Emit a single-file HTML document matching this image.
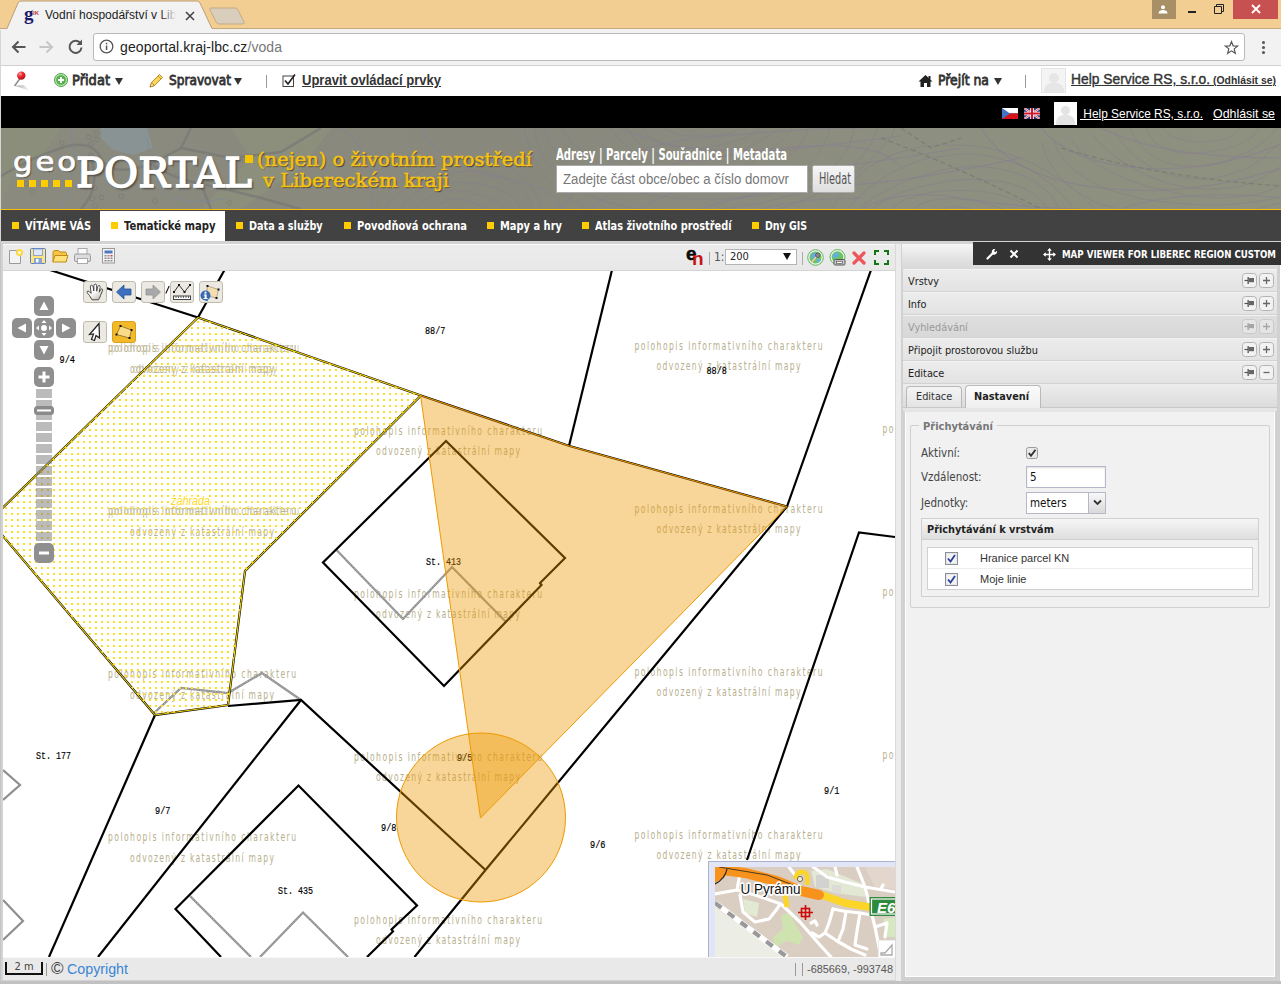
<!DOCTYPE html>
<html lang="cs"><head>
<meta charset="utf-8">
<title>Vodní hospodářství v Libereckém kraji</title>
<style>
*{box-sizing:border-box;margin:0;padding:0}
html,body{width:1281px;height:984px;overflow:hidden;background:#d6d6d6;font-family:"Liberation Sans",sans-serif;}
.abs{position:absolute}
#root{position:relative;width:1281px;height:984px;overflow:hidden}
/* ---------- browser chrome ---------- */
#tabbar{left:0;top:0;width:1281px;height:30px;background:#f2ce93}
#toolbar{left:1px;top:29px;width:1280px;height:37px;background:#f2f2f2;border-bottom:1px solid #d0d0d0}
#urlbox{left:92px;top:4px;width:1152px;height:28px;background:#fff;border:1px solid #b9b9b9;border-radius:3px}
#urltxt{left:26px;top:5px;font-size:14px;color:#222;white-space:nowrap;letter-spacing:0.1px}
#urltxt span{color:#777}
#tabtitle{left:45px;top:8px;font-size:12px;color:#222;white-space:nowrap;width:132px;overflow:hidden}
/* ---------- admin bar ---------- */
#admin{left:1px;top:66px;width:1280px;height:30px;background:#fff}
#admin .t{position:absolute;top:7px;font-weight:bold;font-size:14px;color:#333;white-space:nowrap;font-family:"DejaVu Sans Condensed","DejaVu Sans",sans-serif}
#admin .t.sb{font-family:"DejaVu Sans",sans-serif;font-weight:normal;-webkit-text-stroke:0.800px #333;top:6px}
/* ---------- black bar ---------- */
#black{left:1px;top:96px;width:1280px;height:32px;background:#000}
#black .t{position:absolute;top:10px;font-size:13px;color:#fff;text-decoration:underline;white-space:nowrap}
/* ---------- banner ---------- */
#banner{left:1px;top:128px;width:1280px;height:81px;background:#78786a;overflow:hidden}
#nav{left:1px;top:209px;width:1280px;height:32px;background:#424242;border-top:1px solid #fdbf06}
.nv{position:absolute;top:1px;height:30px;line-height:30px;font-family:"DejaVu Sans Condensed","DejaVu Sans",sans-serif;font-weight:bold;font-size:12px;color:#fff;white-space:nowrap}
.nb{position:absolute;top:12px;width:7px;height:7px;background:#fc0;display:block}
.tag{font-family:"DejaVu Serif",serif;font-size:19px;line-height:22px;color:#f5c211;-webkit-text-stroke:0.600px #f5c211;white-space:nowrap;transform-origin:0 0;text-shadow:1px 1px 1px rgba(0,0,0,.6)}
.mb{width:24px;height:22px;border:1px solid #bfbcae;border-radius:3px;line-height:0}
.acc{font-family:"DejaVu Sans Condensed","DejaVu Sans",sans-serif;font-size:11px;line-height:15px;white-space:nowrap;transform:scaleX(0.985);transform-origin:0 0}
.acc2{font-size:12px;transform:scaleX(0.960)}
.wm{font-family:"DejaVu Sans Condensed","DejaVu Sans",sans-serif;font-size:11.500px;fill:#b7b08d}
.lb{font-family:"Liberation Mono",monospace;font-size:11.500px;fill:#000;stroke:#000;stroke-width:0.200px}
.tri{position:absolute;top:12px;width:0;height:0;border-left:4px solid transparent;border-right:4px solid transparent;border-top:7px solid #333}
</style>
</head>
<body>
<div id="root">

<!-- browser chrome -->
<div id="tabbar" class="abs">
  <div class="abs" style="left:0;top:28px;width:1281px;height:1px;background:#c4a97c"></div>
  <div class="abs" style="left:0;top:29px;width:1281px;height:1px;background:#f2f2f2"></div>
  <svg class="abs" style="left:0;top:0" width="260" height="30" viewBox="0 0 260 30">
    <path d="M3 32 L4 29.500 L7 28.500 L18 3 Q19 1 21 1 L197 1 Q199 1 200 3 L212 28.500 L215 29.500 L216 32" fill="#f2f2f2" stroke="#b99f74" stroke-width="1"></path>
    <path d="M211 8 L235 8 Q237 8 238 10 L244 22 Q245 24 242 24 L219 24 Q217 24 216 22 L210 10 Q209 8 211 8Z" fill="#d9cdbc" stroke="#c3ab84" stroke-width="1"></path>
  </svg>
  <div class="abs" style="left:24px;top:4px;font-family:'Liberation Serif',serif;font-weight:bold;font-size:19px;color:#1a1a6e;line-height:19px">g</div>
  <div class="abs" style="left:33px;top:10px;font-size:6px;color:#c33;font-weight:bold">IK</div>
  <div id="tabtitle" class="abs">Vodní hospodářství v Libereckém</div>
  <div class="abs" style="left:160px;top:5px;width:20px;height:20px;background:linear-gradient(90deg,rgba(242,242,242,0),#f2f2f2 80%)"></div>
  <svg class="abs" style="left:185px;top:11px" width="10" height="10" viewBox="0 0 10 10"><path d="M1 1 L9 9 M9 1 L1 9" stroke="#444" stroke-width="1.6"></path></svg>
  <!-- window buttons -->
  <div class="abs" style="left:1152px;top:0;width:24px;height:19px;background:#a88f66"></div>
  <svg class="abs" style="left:1157px;top:4px" width="12" height="11" viewBox="0 0 12 11"><circle cx="6" cy="3.3" r="2" fill="#fff"></circle><path d="M1.5 9.5 Q1.5 6 6 6 Q10.500 6 10.500 9.500Z" fill="#fff"></path></svg>
  <div class="abs" style="left:1188px;top:11px;width:8px;height:2px;background:#222"></div>
  <svg class="abs" style="left:1213px;top:3px" width="12" height="12" viewBox="0 0 12 12"><path d="M1.500 3.500 H8.500 V10.500 H1.500Z M3.500 3.500 V1.500 H10.500 V8.500 H8.500" fill="none" stroke="#222" stroke-width="1"></path></svg>
  <div class="abs" style="left:1233px;top:0;width:45px;height:19px;background:#c75050"></div>
  <svg class="abs" style="left:1251px;top:4px" width="10" height="10" viewBox="0 0 10 10"><path d="M1 1 L9 9 M9 1 L1 9" stroke="#fff" stroke-width="1.800"></path></svg>
</div>

<div id="toolbar" class="abs">
  <svg class="abs" style="left:10px;top:10px" width="16" height="16" viewBox="0 0 16 16"><path d="M14.500 8 H2.500 M7.500 2.500 L2 8 L7.500 13.500" fill="none" stroke="#555" stroke-width="2"></path></svg>
  <svg class="abs" style="left:37px;top:10px" width="16" height="16" viewBox="0 0 16 16"><path d="M1.500 8 H13.500 M8.500 2.500 L14 8 L8.500 13.500" fill="none" stroke="#c6c6c6" stroke-width="2"></path></svg>
  <svg class="abs" style="left:66px;top:9px" width="17" height="17" viewBox="0 0 17 17"><path d="M13.500 5.500 A6 6 0 1 0 14.500 9.500" fill="none" stroke="#555" stroke-width="2"></path><path d="M15 1.500 V7 H9.500Z" fill="#555"></path></svg>
  <div id="urlbox" class="abs">
    <svg class="abs" style="left:5px;top:5px" width="15" height="15" viewBox="0 0 15 15"><circle cx="7.500" cy="7.500" r="6.300" fill="none" stroke="#555" stroke-width="1.300"></circle><rect x="6.800" y="6.500" width="1.500" height="4.500" fill="#555"></rect><rect x="6.800" y="3.800" width="1.500" height="1.500" fill="#555"></rect></svg>
    <div id="urltxt" class="abs">geoportal.kraj-lbc.cz<span>/voda</span></div>
    <svg class="abs" style="left:1130px;top:6px" width="15" height="15" viewBox="0 0 18 18"><path d="M9 2 L11 7 L16.300 7.300 L12.200 10.700 L13.600 16 L9 13 L4.400 16 L5.800 10.700 L1.700 7.300 L7 7Z" fill="none" stroke="#555" stroke-width="1.400" stroke-linejoin="miter"></path></svg>
  </div>
  <div class="abs" style="left:1261px;top:12px;width:3px;height:3px;background:#555;border-radius:2px;box-shadow:0 5px 0 #555,0 10px 0 #555"></div>
</div>

<!-- admin bar -->
<div id="admin" class="abs">
  <svg class="abs" style="left:10px;top:4px" width="22" height="24" viewBox="0 0 22 24"><defs><radialGradient id="pinr" cx="0.350" cy="0.300" r="0.800"><stop offset="0" stop-color="#ff9c9c"></stop><stop offset="0.450" stop-color="#e8242a"></stop><stop offset="1" stop-color="#a80f14"></stop></radialGradient><linearGradient id="pinsh" x1="0" x2="1"><stop offset="0" stop-color="#aaa"></stop><stop offset="1" stop-color="#f4f4f4"></stop></linearGradient></defs><path d="M3.500 15.800 L18 20.500 L13 15Z" fill="url(#pinsh)"></path><path d="M3.500 16 L9 8.500" stroke="#8a8a8a" stroke-width="1.400"></path><circle cx="10.300" cy="5.600" r="4.200" fill="url(#pinr)"></circle></svg>
  <svg class="abs" style="left:53px;top:7px" width="14" height="14" viewBox="0 0 15 15"><circle cx="7.500" cy="7.500" r="7" fill="#b5e2ae" stroke="#4c9d45" stroke-width="1"></circle><circle cx="7.500" cy="7.500" r="5.200" fill="#55b04c"></circle><path d="M7.500 4.300 V10.700 M4.300 7.500 H10.700" stroke="#fff" stroke-width="2.200"></path></svg>
  <div class="t sb" style="left: 71px; transform: scaleX(0.9314); transform-origin: 0px 0px;">Přidat</div><i class="tri" style="left:114px"></i>
  <svg class="abs" style="left:147px;top:6px" width="17" height="17" viewBox="0 0 17 17"><path d="M2 15 L3.500 10.500 L11.500 2.500 L14.500 5.500 L6.500 13.500Z" fill="#f9d65c" stroke="#c08a2a" stroke-width="1"></path><path d="M10 4 L13 7" stroke="#c08a2a" stroke-width="0.800"></path><path d="M2 15 L3.500 10.500 L6.500 13.500Z" fill="#f5deb0" stroke="#b07818" stroke-width="0.800"></path></svg>
  <div class="t sb" style="left: 168px; transform: scaleX(0.8694); transform-origin: 0px 0px;">Spravovat</div><i class="tri" style="left:233px"></i>
  <div class="abs" style="left:265px;top:9px;width:1px;height:13px;background:#999"></div>
  <svg class="abs" style="left:281px;top:7px" width="15" height="15" viewBox="0 0 15 15"><rect x="1" y="3" width="10.500" height="10.500" fill="#fff" stroke="#444" stroke-width="1"></rect><path d="M3 7.500 L6 11 L13 1.500" fill="none" stroke="#222" stroke-width="1.700"></path></svg>
  <div class="t" style="left: 301px; text-decoration: underline; font-family: &quot;Liberation Sans&quot;, sans-serif; top: 6px; transform: scaleX(0.9303); transform-origin: 0px 0px;">Upravit ovládací prvky</div>
  <svg class="abs" style="left:917px;top:8px" width="15" height="14" viewBox="0 0 15 14"><path d="M7.500 1 L0.500 7.500 H2.500 V13 H6 V9 H9 V13 H12.500 V7.500 H14.500Z" fill="#222"></path><rect x="10.500" y="2" width="2" height="3.500" fill="#222"></rect></svg>
  <div class="t sb" style="left: 937px; transform: scaleX(0.8879); transform-origin: 0px 0px;">Přejít na</div><i class="tri" style="left:993px"></i>
  <div class="abs" style="left:1024px;top:9px;width:1px;height:13px;background:#999"></div>
  <div class="abs" style="left:1040px;top:2px;width:25px;height:25px;background:#f4f4f4;border:1px solid #e4e4e4;overflow:hidden"><div class="abs" style="left:7px;top:4px;width:10px;height:10px;border-radius:5px;background:#e6e6e6"></div><div class="abs" style="left:2px;top:14px;width:20px;height:14px;border-radius:8px 8px 0 0;background:#e6e6e6"></div></div>
  <div class="t" style="left: 1070px; top: 5px; text-decoration: underline; font-family: &quot;Liberation Sans&quot;, sans-serif; font-weight: normal; -webkit-text-stroke: 0.4px rgb(51, 51, 51); transform: scaleX(0.9881); transform-origin: 0px 0px;">Help Service RS, s.r.o.&nbsp;</div>
  <div class="t" style="left: 1212px; top: 9px; font-size: 10px; text-decoration: underline; font-family: &quot;Liberation Sans&quot;, sans-serif; transform: scaleX(1.04); transform-origin: 0px 0px;">(Odhlásit se)</div>
</div>

<!-- black bar -->
<div id="black" class="abs">
  <svg class="abs" style="left:1001px;top:12px" width="16" height="11" viewBox="0 0 16 11"><rect width="16" height="5.500" fill="#fff"></rect><rect y="5.500" width="16" height="5.500" fill="#d7141a"></rect><path d="M0 0 L8 5.500 L0 11Z" fill="#3f74c8"></path></svg>
  <svg class="abs" style="left:1023px;top:12px" width="16" height="11" viewBox="0 0 16 11"><rect width="16" height="11" fill="#25346c"></rect><path d="M0 0 L16 11 M16 0 L0 11" stroke="#fff" stroke-width="2.200"></path><path d="M0 0 L16 11 M16 0 L0 11" stroke="#cf142b" stroke-width="0.800"></path><path d="M8 0 V11 M0 5.500 H16" stroke="#fff" stroke-width="3.600"></path><path d="M8 0 V11 M0 5.500 H16" stroke="#cf142b" stroke-width="2"></path></svg>
  <div class="abs" style="left:1053px;top:6px;width:23px;height:23px;background:#fdfdfd;overflow:hidden"><div class="abs" style="left:7px;top:4px;width:9px;height:9px;border-radius:5px;background:#e4e4e4"></div><div class="abs" style="left:2px;top:13px;width:19px;height:14px;border-radius:8px 8px 0 0;background:#e4e4e4"></div></div>
  <div class="t" style="left: 1079px; transform: scaleX(0.9152); transform-origin: 0px 0px;">&nbsp;Help Service RS, s.r.o.</div>
  <div class="t" style="left: 1212px; transform: scaleX(0.9532); transform-origin: 0px 0px;">Odhlásit se</div>
</div>

<!-- banner -->
<div id="banner" class="abs">
  <svg class="abs" style="left:0;top:0" width="1280" height="81" viewBox="0 0 1280 81">
    <defs><linearGradient id="bgg" x1="0" x2="1" y1="0" y2="0"><stop offset="0" stop-color="#8a8a7f"></stop><stop offset="0.400" stop-color="#88887d"></stop><stop offset="0.700" stop-color="#8d8f80"></stop><stop offset="1" stop-color="#8e917f"></stop></linearGradient></defs>
    <rect width="1280" height="81" fill="url(#bgg)"></rect>
    <path d="M0 0 H60 L40 30 L10 50 L0 81Z" fill="#8c9079" opacity="0.700"></path>
    <path d="M230 0 H330 L300 40 L240 81 H200 L250 30Z" fill="#8d927a" opacity="0.700"></path>
    <path d="M100 0 L146 0 L152 20 L132 27 L112 22 L100 10Z" fill="#899393"></path>
    <g fill="none" stroke="#7c7c78" stroke-width="2.500" opacity="0.850">
      <path d="M0 48 Q30 30 60 20 T100 30 T150 36 L180 20 L190 0"></path><path d="M150 36 Q170 50 200 56 T260 70 L300 81"></path><path d="M90 30 Q100 60 80 81"></path><path d="M180 20 L230 30 L280 24 L320 0"></path><path d="M200 56 L210 81"></path>
    </g>
    <g fill="none" stroke="#7e8a98" stroke-width="1" opacity="0.800"><path d="M70 0 Q80 40 60 81"></path><path d="M146 10 Q150 40 160 60 T230 70"></path></g>
    <g fill="none" stroke="#8a8190" stroke-width="1.200" opacity="0.750">
      <path d="M560 81 Q600 20 700 10 T860 0"></path><path d="M590 81 Q640 35 720 28 T900 8"></path><path d="M640 81 Q690 50 760 46 T960 20"></path>
      <path d="M700 81 Q760 60 830 58 T1020 30"></path><path d="M980 0 Q1010 50 1100 60 T1280 40"></path><path d="M1040 0 Q1070 35 1140 40 T1280 16"></path>
      <path d="M860 81 Q900 60 960 70 T1080 81"></path><path d="M1120 81 Q1180 60 1280 70"></path><path d="M420 0 Q440 40 500 50 T560 81"></path><path d="M340 0 Q380 30 370 81"></path>
      <path d="M620 0 Q680 30 780 20 T900 40"></path><path d="M1100 0 Q1160 30 1280 30"></path><path d="M760 81 Q800 70 860 70"></path>
    </g>
    <g fill="none" stroke="#877f8c" stroke-width="1" opacity="0.550"><path d="M748 -17 L748 -13 L747 -10 L745 -6 L742 -3 L738 0 L734 3 L729 5 L723 6 L718 7 L712 8 L706 8 L701 8 L695 8 L690 8 L684 8 L679 7 L673 5 L668 3 L663 1 L659 -2 L656 -5 L653 -8 L652 -12 L652 -16"></path><path d="M768 -16 L767 -11 L765 -6 L761 -1 L756 3 L750 7 L744 10 L737 12 L730 14 L723 16 L716 18 L709 19 L701 20 L694 20 L686 20 L678 19 L670 18 L662 16 L655 13 L650 9 L645 5 L641 0 L639 -5 L637 -9 L637 -14"></path><path d="M786 -15 L783 -8 L779 -2 L774 3 L767 8 L761 12 L754 16 L746 20 L738 24 L730 27 L721 29 L712 31 L702 33 L691 33 L681 33 L671 31 L661 29 L652 25 L645 21 L638 16 L633 10 L629 5 L626 -1 L623 -7 L622 -13"></path><path d="M800 -14 L796 -7 L791 0 L786 7 L780 13 L773 19 L766 25 L758 30 L748 35 L738 39 L727 43 L715 45 L702 46 L689 46 L677 44 L665 41 L654 37 L645 32 L636 27 L629 21 L622 15 L616 9 L611 2 L607 -4 L603 -11"></path><path d="M812 -13 L810 -5 L806 4 L802 12 L796 20 L789 28 L781 35 L771 42 L759 47 L746 52 L732 55 L717 57 L703 57 L688 55 L674 52 L661 49 L649 44 L638 39 L627 34 L617 28 L608 21 L599 15 L592 7 L585 -1 L580 -9"></path><path d="M830 -12 L829 -2 L827 8 L822 18 L816 28 L807 37 L797 45 L784 52 L769 58 L753 62 L736 64 L719 65 L703 64 L687 62 L671 60 L657 56 L642 52 L628 48 L615 43 L602 37 L590 30 L579 22 L570 13 L563 3 L559 -7"></path><path d="M853 -10 L853 1 L850 13 L844 25 L835 36 L823 45 L808 53 L792 60 L775 65 L757 68 L739 70 L721 71 L703 71 L685 71 L668 69 L650 67 L633 64 L616 60 L599 54 L584 47 L570 39 L559 29 L550 18 L545 6 L543 -6"></path><path d="M878 -9 L875 5 L869 18 L860 30 L847 41 L832 50 L816 58 L798 65 L780 70 L761 75 L742 78 L723 81 L703 83 L683 84 L663 83 L642 82 L622 78 L602 73 L584 65 L568 56 L555 45 L545 34 L538 21 L534 8 L533 -5"></path><path d="M896 -8 L891 7 L881 20 L869 33 L855 44 L839 54 L823 63 L805 71 L787 78 L768 85 L748 91 L726 95 L704 98 L681 100 L657 99 L634 96 L612 91 L591 83 L573 73 L558 62 L546 50 L536 36 L530 23 L525 9 L522 -4"></path><path d="M929 107 L930 105 L932 103 L933 101 L935 99 L937 97 L940 95 L942 94 L945 92 L948 91 L952 90 L956 89 L960 89 L963 89 L967 90 L971 91 L974 92 L977 93 L980 95 L982 97 L984 98 L986 100 L988 102 L989 104 L991 106"></path><path d="M915 106 L916 102 L917 99 L919 96 L922 93 L924 90 L928 87 L932 84 L937 82 L942 81 L948 79 L954 79 L959 79 L965 80 L970 81 L976 82 L980 84 L985 86 L989 88 L993 90 L997 93 L1000 95 L1003 98 L1006 101 L1008 104"></path><path d="M899 104 L899 99 L901 95 L903 90 L906 86 L911 82 L916 78 L922 75 L929 73 L937 71 L944 71 L952 70 L959 71 L966 72 L973 73 L980 74 L987 76 L993 78 L999 80 L1005 83 L1011 86 L1016 89 L1021 93 L1024 98 L1026 102"></path><path d="M880 102 L881 96 L883 90 L887 84 L892 79 L898 75 L906 71 L914 68 L923 66 L932 64 L941 63 L950 63 L959 62 L968 63 L977 63 L986 64 L995 66 L1003 68 L1012 71 L1019 74 L1026 78 L1032 83 L1037 89 L1040 95 L1041 101"></path><path d="M861 100 L863 93 L867 86 L873 80 L881 74 L889 69 L898 65 L908 62 L918 59 L928 57 L938 55 L948 53 L959 52 L970 51 L981 52 L992 53 L1003 54 L1014 57 L1024 61 L1033 66 L1040 72 L1045 78 L1049 85 L1052 92 L1053 99"></path><path d="M845 99 L850 91 L856 83 L863 76 L872 70 L881 65 L890 60 L900 55 L911 51 L922 47 L933 44 L946 41 L959 39 L972 38 L986 39 L999 41 L1012 44 L1023 48 L1034 54 L1042 60 L1050 67 L1055 75 L1059 82 L1063 90 L1065 98"></path><path d="M835 98 L840 89 L846 81 L853 73 L861 66 L870 58 L879 52 L890 45 L901 40 L914 34 L928 30 L943 28 L958 26 L974 26 L989 28 L1004 32 L1017 36 L1030 42 L1040 49 L1050 56 L1058 64 L1065 71 L1071 79 L1077 87 L1081 96"></path><path d="M824 96 L828 87 L833 77 L839 68 L846 59 L855 50 L865 41 L877 34 L891 27 L907 22 L923 18 L941 17 L958 17 L975 18 L992 21 L1007 26 L1022 31 L1035 37 L1047 44 L1059 51 L1069 58 L1079 66 L1088 75 L1096 84 L1103 93"></path><path d="M1240 -5 L1240 -2 L1238 1 L1236 3 L1233 6 L1230 8 L1226 10 L1222 11 L1218 12 L1214 13 L1209 13 L1205 14 L1201 14 L1197 14 L1192 13 L1188 13 L1184 12 L1179 11 L1175 10 L1171 9 L1168 7 L1165 4 L1163 2 L1161 -1 L1160 -4"></path><path d="M1259 -2 L1257 2 L1254 5 L1251 9 L1246 12 L1241 15 L1236 17 L1231 19 L1225 21 L1219 22 L1213 23 L1207 24 L1201 25 L1195 25 L1188 25 L1182 25 L1175 24 L1169 22 L1163 20 L1158 17 L1154 14 L1150 10 L1148 7 L1146 3 L1145 -2"></path><path d="M1276 -0 L1272 5 L1268 9 L1263 14 L1258 17 L1252 21 L1246 24 L1239 27 L1233 30 L1226 33 L1218 35 L1210 37 L1202 38 L1193 38 L1184 38 L1175 37 L1167 35 L1160 32 L1153 29 L1147 25 L1142 20 L1138 15 L1135 11 L1132 6 L1130 1"></path><path d="M1289 1 L1285 7 L1281 13 L1276 18 L1270 23 L1264 28 L1258 33 L1250 38 L1242 42 L1233 45 L1223 48 L1213 50 L1202 51 L1191 51 L1180 49 L1170 47 L1161 44 L1152 40 L1144 35 L1137 31 L1131 26 L1126 20 L1121 15 L1117 9 L1113 3"></path><path d="M1303 3 L1300 10 L1296 17 L1292 24 L1286 31 L1280 38 L1272 44 L1263 49 L1252 54 L1241 58 L1228 60 L1215 61 L1202 61 L1190 60 L1178 58 L1166 55 L1155 51 L1145 47 L1136 42 L1127 37 L1119 32 L1111 26 L1104 20 L1097 14 L1092 7"></path><path d="M1321 5 L1320 14 L1317 23 L1312 32 L1305 40 L1296 48 L1286 54 L1274 60 L1261 65 L1246 68 L1232 69 L1217 70 L1203 69 L1189 68 L1175 65 L1162 62 L1149 59 L1137 55 L1125 51 L1114 46 L1102 40 L1092 34 L1083 27 L1076 19 L1070 10"></path><path d="M1345 8 L1343 19 L1338 29 L1331 39 L1322 48 L1310 56 L1297 62 L1282 68 L1266 72 L1251 74 L1235 76 L1219 77 L1203 77 L1187 76 L1172 75 L1156 73 L1141 71 L1126 67 L1111 63 L1097 57 L1084 50 L1073 42 L1064 33 L1057 23 L1053 13"></path><path d="M1368 11 L1363 23 L1355 34 L1345 44 L1333 53 L1319 61 L1304 68 L1288 73 L1271 77 L1255 81 L1238 84 L1221 86 L1203 88 L1185 89 L1167 89 L1149 87 L1131 85 L1113 80 L1096 75 L1081 67 L1068 58 L1058 48 L1050 37 L1044 26 L1041 14"></path><path d="M438 96 L439 94 L440 92 L441 91 L443 89 L444 88 L446 86 L448 85 L450 84 L452 83 L454 82 L457 81 L460 81 L462 81 L465 82 L467 82 L470 83 L472 84 L474 86 L475 87 L477 89 L478 90 L480 92 L481 93 L482 95"></path><path d="M427 93 L427 90 L429 88 L430 85 L432 82 L434 80 L437 77 L440 75 L444 74 L447 72 L451 71 L455 71 L460 71 L464 72 L467 73 L471 74 L474 75 L478 77 L481 79 L483 80 L486 82 L489 85 L491 87 L493 89 L495 92"></path><path d="M413 90 L414 86 L415 82 L418 78 L420 75 L424 71 L428 69 L433 66 L438 64 L443 63 L449 63 L454 62 L459 63 L465 63 L470 64 L474 66 L479 67 L484 69 L488 71 L493 73 L497 75 L501 78 L504 81 L507 85 L510 89"></path><path d="M398 87 L399 82 L402 77 L405 72 L410 68 L415 64 L421 61 L427 59 L433 57 L440 56 L446 55 L453 54 L459 54 L466 55 L472 55 L479 56 L485 57 L491 59 L498 61 L503 64 L509 67 L514 71 L517 76 L520 81 L522 86"></path><path d="M383 84 L386 78 L390 72 L395 67 L401 63 L408 59 L415 55 L422 52 L429 50 L436 48 L444 46 L451 45 L459 44 L467 43 L475 43 L483 44 L492 46 L500 48 L507 51 L514 55 L520 60 L524 65 L528 71 L531 78 L532 84"></path><path d="M372 82 L377 75 L382 69 L388 63 L394 58 L401 53 L408 49 L416 45 L424 41 L432 38 L440 35 L449 33 L459 31 L469 30 L479 31 L488 32 L498 35 L507 39 L515 43 L522 49 L528 55 L532 61 L536 68 L539 75 L541 82"></path></g><g fill="none" stroke="#7d7d7a" stroke-width="0.800" opacity="0.800"><rect x="80" y="40" width="4" height="4" transform="rotate(6 80 40)"></rect><rect x="204" y="52" width="4" height="4" transform="rotate(30 204 52)"></rect><rect x="59" y="13" width="4" height="4" transform="rotate(4 59 13)"></rect><rect x="25" y="53" width="4" height="4" transform="rotate(35 25 53)"></rect><rect x="94" y="9" width="4" height="4" transform="rotate(14 94 9)"></rect><rect x="153" y="70" width="4" height="4" transform="rotate(23 153 70)"></rect><rect x="90" y="24" width="4" height="4" transform="rotate(52 90 24)"></rect><rect x="47" y="35" width="4" height="4" transform="rotate(13 47 35)"></rect><rect x="26" y="35" width="4" height="4" transform="rotate(51 26 35)"></rect><rect x="89" y="26" width="4" height="4" transform="rotate(10 89 26)"></rect><rect x="99" y="39" width="4" height="4" transform="rotate(40 99 39)"></rect><rect x="207" y="49" width="4" height="4" transform="rotate(5 207 49)"></rect><rect x="175" y="45" width="4" height="4" transform="rotate(42 175 45)"></rect><rect x="119" y="66" width="4" height="4" transform="rotate(15 119 66)"></rect><rect x="65" y="33" width="4" height="4" transform="rotate(30 65 33)"></rect><rect x="91" y="13" width="4" height="4" transform="rotate(60 91 13)"></rect><rect x="229" y="72" width="4" height="4" transform="rotate(53 229 72)"></rect><rect x="96" y="2" width="4" height="4" transform="rotate(58 96 2)"></rect><rect x="94" y="75" width="4" height="4" transform="rotate(45 94 75)"></rect><rect x="99" y="67" width="4" height="4" transform="rotate(12 99 67)"></rect><rect x="125" y="56" width="4" height="4" transform="rotate(38 125 56)"></rect><rect x="93" y="57" width="4" height="4" transform="rotate(28 93 57)"></rect><rect x="61" y="31" width="4" height="4" transform="rotate(19 61 31)"></rect><rect x="86" y="7" width="4" height="4" transform="rotate(5 86 7)"></rect><rect x="31" y="61" width="4" height="4" transform="rotate(40 31 61)"></rect><rect x="91" y="68" width="4" height="4" transform="rotate(34 91 68)"></rect></g><g fill="none" stroke="#787a70" stroke-width="1.200" opacity="0.800" stroke-dasharray="5 3">
      <path d="M880 10 Q960 40 1040 81"></path><path d="M1060 20 Q1160 50 1280 58"></path><path d="M900 0 L930 20 L960 10"></path>
    </g>
  </svg>
  <div class="abs" id="geo" style="left: 12px; top: 19px; -webkit-text-stroke: 0.7px rgb(255, 255, 255); font-family: &quot;DejaVu Sans&quot;, sans-serif; font-size: 27px; line-height: 30px; color: rgb(255, 255, 255); letter-spacing: 2.5px; text-shadow: rgba(0, 0, 0, 0.5) 1px 1px 1px; transform: scaleX(1.1422); transform-origin: 0px 0px;">geo</div>
  <div class="abs" style="left:16px;top:52px;width:7px;height:7px;background:#fc0;box-shadow:12px 0 0 #fc0,24px 0 0 #fc0,36px 0 0 #fc0,48px 0 0 #fc0"></div>
  <div class="abs" id="portal" style="left: 74.5px; top: 19.5px; font-family: &quot;DejaVu Serif&quot;, serif; font-size: 41px; line-height: 50px; color: rgb(255, 255, 255); white-space: nowrap; -webkit-text-stroke: 1.5px rgb(255, 255, 255); text-shadow: rgba(0, 0, 0, 0.45) 2px 2px 2px; transform: scaleX(1.0156); transform-origin: 0px 0px;">PORTAL</div>
  <div class="abs" style="left:244px;top:27px;width:8px;height:8px;background:#f5c400"></div>
  <div class="abs tag" id="tag1" style="left: 256px; top: 20px; transform: scaleX(1.0257); transform-origin: 0px 0px;">(nejen) o životním prostředí</div>
  <div class="abs tag" id="tag2" style="left: 262px; top: 41px; transform: scaleX(1.0302); transform-origin: 0px 0px;">v Libereckém kraji</div>
  <div class="abs" id="srchlinks" style="left: 555px; top: 18px; font-family: &quot;DejaVu Sans Condensed&quot;, &quot;DejaVu Sans&quot;, sans-serif; font-weight: bold; font-size: 15px; line-height: 18px; color: rgb(255, 255, 255); white-space: nowrap; transform-origin: 0px 0px; transform: scaleX(0.7466);">Adresy | Parcely | Souřadnice | Metadata</div>
  <div class="abs" style="left:555px;top:37px;width:252px;height:28px;background:#fff;border:1px solid #aaa"><div class="abs" style="left: 6px; top: 5px; font-size: 14px; color: rgb(119, 119, 119); white-space: nowrap; transform: scaleX(0.9429); transform-origin: 0px 0px;">Zadejte část obce/obec a číslo domovr</div></div>
  <div class="abs" style="left:811px;top:37px;width:43px;height:28px;background:linear-gradient(#f6f6f6,#dedede);border:1px solid #aaa;border-radius:2px"><div class="abs" id="hledat" style="left: 6px; top: 4px; font-family: &quot;DejaVu Sans Condensed&quot;, &quot;DejaVu Sans&quot;, sans-serif; font-size: 15px; color: rgb(85, 85, 85); transform-origin: 0px 0px; white-space: nowrap; transform: scaleX(0.7216);">Hledat</div></div>
</div>

<!-- nav -->
<div id="nav" class="abs">
  <i class="nb" style="left:11px"></i><div class="nv" style="left: 23.5px; transform: scaleX(0.9076); transform-origin: 0px 0px;">VÍTÁME VÁS</div>
  <div class="abs" style="left:99px;top:1px;width:125px;height:30px;background:#fff"></div>
  <i class="nb" style="left:110px"></i><div class="nv" style="left: 122.9px; color: rgb(34, 34, 34); transform: scaleX(0.9335); transform-origin: 0px 0px;">Tematické mapy</div>
  <i class="nb" style="left:235px"></i><div class="nv" style="left: 247.9px; transform: scaleX(0.8936); transform-origin: 0px 0px;">Data a služby</div>
  <i class="nb" style="left:343px"></i><div class="nv" style="left: 355.5px; transform: scaleX(0.9183); transform-origin: 0px 0px;">Povodňová ochrana</div>
  <i class="nb" style="left:486px"></i><div class="nv" style="left: 499px; transform: scaleX(0.9166); transform-origin: 0px 0px;">Mapy a hry</div>
  <i class="nb" style="left:581px"></i><div class="nv" style="left: 593.5px; transform: scaleX(0.9059); transform-origin: 0px 0px;">Atlas životního prostředí</div>
  <i class="nb" style="left:751px"></i><div class="nv" style="left: 763.9px; transform: scaleX(0.8754); transform-origin: 0px 0px;">Dny GIS</div>
</div>

<!-- map toolbar -->
<div class="abs" style="left:0;top:241px;width:1281px;height:743px;background:#d3d3d3"></div>
<div class="abs" style="left:0;top:241px;width:1px;height:743px;background:#c4c4c4"></div>
<div class="abs" id="mtb" style="left:3px;top:244px;width:892px;height:27px;background:linear-gradient(#ececec,#e8e8e8);border-top:1px solid #fafafa;border-bottom:1px solid #d4d4d4">
  <svg class="abs" style="left:5px;top:3px" width="16" height="17" viewBox="0 0 16 17"><path d="M1.500 2.500 H9 L12.500 6 V15.500 H1.500Z" fill="#f3f3f1" stroke="#9a9a9a"></path><circle cx="11.500" cy="4.500" r="3.600" fill="#ffd83a"></circle><circle cx="11.500" cy="4.500" r="1.500" fill="#fff"></circle></svg>
  <svg class="abs" style="left:27px;top:3px" width="16" height="16" viewBox="0 0 16 16"><rect x="0.500" y="0.500" width="15" height="15" rx="1" fill="#ffe477" stroke="#5b7fc4"></rect><rect x="3.500" y="1" width="9" height="6.500" fill="#dfe8f8" stroke="#7a96cc" stroke-width="0.800"></rect><rect x="4" y="10" width="8" height="5.500" fill="#8aa4d8"></rect><rect x="6" y="11" width="2.500" height="3.500" fill="#fff"></rect></svg>
  <svg class="abs" style="left:49px;top:4px" width="17" height="15" viewBox="0 0 17 15"><path d="M1 3.500 Q1 1.500 3 1.500 H6.500 L8 3 H13 Q14.500 3 14.500 4.500 V12.500 H1Z" fill="#f7c545" stroke="#c08a14"></path><path d="M0.800 13 L3 6.500 H16 L14 13Z" fill="#ffe27a" stroke="#c08a14"></path></svg>
  <svg class="abs" style="left:71px;top:3px" width="17" height="16" viewBox="0 0 17 16"><rect x="4" y="0.500" width="9" height="6" fill="#fafafa" stroke="#aaa"></rect><rect x="0.500" y="6" width="16" height="7.500" rx="1.500" fill="#dcdcdc" stroke="#9c9c9c"></rect><rect x="3.500" y="10.500" width="10" height="5" fill="#fff" stroke="#aaa"></rect></svg>
  <svg class="abs" style="left:99px;top:3px" width="13" height="16" viewBox="0 0 13 16"><rect x="0.500" y="0.500" width="12" height="14.500" fill="#f4f4f4" stroke="#9a9a9a"></rect><rect x="2.500" y="2.500" width="8" height="3" fill="#4f78c0"></rect><g fill="#8a8a8a"><rect x="2.500" y="7" width="2" height="1.500"></rect><rect x="5.500" y="7" width="2" height="1.500"></rect><rect x="8.500" y="7" width="2" height="1.500" fill="#d33"></rect><rect x="2.500" y="9.500" width="2" height="1.500"></rect><rect x="5.500" y="9.500" width="2" height="1.500"></rect><rect x="8.500" y="9.500" width="2" height="1.500"></rect><rect x="2.500" y="12" width="2" height="1.500"></rect><rect x="5.500" y="12" width="2" height="1.500"></rect><rect x="8.500" y="12" width="2" height="1.500"></rect></g></svg>
  <div class="abs" style="left:683px;top:-1px;font-family:'Liberation Sans',sans-serif;font-weight:bold;font-size:19px;line-height:19px;color:#0a0a0a;-webkit-text-stroke:0.500px #0a0a0a">e</div>
  <div class="abs" style="left:689px;top:4px;font-family:'Liberation Sans',sans-serif;font-weight:bold;font-size:19px;line-height:19px;color:#c51616">n</div>
  <div class="abs" style="left:706px;top:7px;width:1px;height:13px;background:#aaa"></div>
  <div class="abs" style="left:711px;top:5px;font-size:12px;color:#555;font-family:'DejaVu Sans Condensed','DejaVu Sans',sans-serif">1:</div>
  <div class="abs" style="left:722px;top:4px;width:72px;height:16px;background:#fff;border:1px solid #b4b4b4"><div class="abs" style="left:4px;top:0px;font-size:11px;color:#222;font-family:'DejaVu Sans Condensed','DejaVu Sans',sans-serif">200</div><div class="abs" style="left:57px;top:3px;width:0;height:0;border-left:4px solid transparent;border-right:4px solid transparent;border-top:7px solid #111"></div></div>
  <div class="abs" style="left:799px;top:7px;width:1px;height:13px;background:#aaa"></div>
  <svg class="abs" style="left:804px;top:4px" width="17" height="17" viewBox="0 0 17 17"><circle cx="8.500" cy="8.500" r="7.800" fill="#e9f6e4" stroke="#63b463"></circle><circle cx="8.500" cy="8.500" r="6" fill="#6cc460"></circle><path d="M4 6 Q6 3 9 3.500 Q10 6 8 8 Q6 10 4 9Z" fill="#62aee6"></path><path d="M10 10 Q13 9 13.500 11 Q12 14 10 13.500Z" fill="#62aee6"></path><path d="M5 13 L10 7" stroke="#f3c7c0" stroke-width="1.600"></path><circle cx="10.800" cy="6.200" r="2.300" fill="#8a8a8a" stroke="#555" stroke-width="0.800"></circle></svg>
  <svg class="abs" style="left:826px;top:4px" width="17" height="17" viewBox="0 0 17 17"><circle cx="8.500" cy="8" r="7.500" fill="#e9f6e4" stroke="#63b463"></circle><circle cx="8.500" cy="8" r="5.800" fill="#6cc460"></circle><path d="M4 6 Q6 3 9 3.500 Q11 5 9 7.500 Q6 10 4 9Z" fill="#62aee6"></path><rect x="5" y="10.500" width="11" height="5.500" rx="1.200" fill="#c8c8c8" stroke="#555"></rect><rect x="7.500" y="12.300" width="6" height="2" fill="#fff" stroke="#555" stroke-width="0.700"></rect></svg>
  <svg class="abs" style="left:849px;top:6px" width="14" height="14" viewBox="0 0 14 14"><path d="M2 2 L12 12 M12 2 L2 12" stroke="#ee555b" stroke-width="3.200" stroke-linecap="round"></path></svg>
  <svg class="abs" style="left:871px;top:5px" width="15" height="15" viewBox="0 0 15 15"><path d="M1 5 V1 H5 M10 1 H14 V5 M14 10 V14 H10 M5 14 H1 V10" fill="none" stroke="#117711" stroke-width="2"></path></svg>
</div>

<svg class="abs" style="left:3px;top:271px" width="892" height="686" viewBox="3 271 892 686">
<defs>
<pattern id="dots" x="5" y="3" width="6" height="6" patternUnits="userSpaceOnUse"><rect x="0" y="0" width="2" height="2" fill="#ffde21"></rect></pattern>
<clipPath id="mc"><rect x="3" y="270" width="892" height="687"></rect></clipPath>
</defs>
<rect x="3" y="270" width="892" height="687" fill="#fff"></rect>
<g clip-path="url(#mc)">
<text class="wm" transform="translate(108,352) scale(0.74,1)" textLength="254.1" lengthAdjust="spacing">polohopis informativního charakteru</text><text class="wm" transform="translate(130,372.5) scale(0.74,1)" textLength="194.6" lengthAdjust="spacing">odvozený z katastrální mapy</text><text class="wm" transform="translate(354,434.5) scale(0.74,1)" textLength="254.1" lengthAdjust="spacing">polohopis informativního charakteru</text><text class="wm" transform="translate(376,455.0) scale(0.74,1)" textLength="194.6" lengthAdjust="spacing">odvozený z katastrální mapy</text><text class="wm" transform="translate(634.5,349.9) scale(0.74,1)" textLength="254.1" lengthAdjust="spacing">polohopis informativního charakteru</text><text class="wm" transform="translate(656.5,370.4) scale(0.74,1)" textLength="194.6" lengthAdjust="spacing">odvozený z katastrální mapy</text><text class="wm" transform="translate(882.5,433) scale(0.74,1)" textLength="254.1" lengthAdjust="spacing">polohopis informativního charakteru</text><text class="wm" transform="translate(904.5,453.5) scale(0.74,1)" textLength="194.6" lengthAdjust="spacing">odvozený z katastrální mapy</text><text class="wm" transform="translate(108,515) scale(0.74,1)" textLength="254.1" lengthAdjust="spacing">polohopis informativního charakteru</text><text class="wm" transform="translate(130,535.5) scale(0.74,1)" textLength="194.6" lengthAdjust="spacing">odvozený z katastrální mapy</text><text class="wm" transform="translate(354,597.5) scale(0.74,1)" textLength="254.1" lengthAdjust="spacing">polohopis informativního charakteru</text><text class="wm" transform="translate(376,618.0) scale(0.74,1)" textLength="194.6" lengthAdjust="spacing">odvozený z katastrální mapy</text><text class="wm" transform="translate(634.5,512.9) scale(0.74,1)" textLength="254.1" lengthAdjust="spacing">polohopis informativního charakteru</text><text class="wm" transform="translate(656.5,533.4) scale(0.74,1)" textLength="194.6" lengthAdjust="spacing">odvozený z katastrální mapy</text><text class="wm" transform="translate(882.5,596) scale(0.74,1)" textLength="254.1" lengthAdjust="spacing">polohopis informativního charakteru</text><text class="wm" transform="translate(904.5,616.5) scale(0.74,1)" textLength="194.6" lengthAdjust="spacing">odvozený z katastrální mapy</text><text class="wm" transform="translate(108,678) scale(0.74,1)" textLength="254.1" lengthAdjust="spacing">polohopis informativního charakteru</text><text class="wm" transform="translate(130,698.5) scale(0.74,1)" textLength="194.6" lengthAdjust="spacing">odvozený z katastrální mapy</text><text class="wm" transform="translate(354,760.5) scale(0.74,1)" textLength="254.1" lengthAdjust="spacing">polohopis informativního charakteru</text><text class="wm" transform="translate(376,781.0) scale(0.74,1)" textLength="194.6" lengthAdjust="spacing">odvozený z katastrální mapy</text><text class="wm" transform="translate(634.5,675.9) scale(0.74,1)" textLength="254.1" lengthAdjust="spacing">polohopis informativního charakteru</text><text class="wm" transform="translate(656.5,696.4) scale(0.74,1)" textLength="194.6" lengthAdjust="spacing">odvozený z katastrální mapy</text><text class="wm" transform="translate(882.5,759) scale(0.74,1)" textLength="254.1" lengthAdjust="spacing">polohopis informativního charakteru</text><text class="wm" transform="translate(904.5,779.5) scale(0.74,1)" textLength="194.6" lengthAdjust="spacing">odvozený z katastrální mapy</text><text class="wm" transform="translate(108,841) scale(0.74,1)" textLength="254.1" lengthAdjust="spacing">polohopis informativního charakteru</text><text class="wm" transform="translate(130,861.5) scale(0.74,1)" textLength="194.6" lengthAdjust="spacing">odvozený z katastrální mapy</text><text class="wm" transform="translate(354,923.5) scale(0.74,1)" textLength="254.1" lengthAdjust="spacing">polohopis informativního charakteru</text><text class="wm" transform="translate(376,944.0) scale(0.74,1)" textLength="194.6" lengthAdjust="spacing">odvozený z katastrální mapy</text><text class="wm" transform="translate(634.5,838.9) scale(0.74,1)" textLength="254.1" lengthAdjust="spacing">polohopis informativního charakteru</text><text class="wm" transform="translate(656.5,859.4) scale(0.74,1)" textLength="194.6" lengthAdjust="spacing">odvozený z katastrální mapy</text><text class="wm" transform="translate(882.5,922) scale(0.74,1)" textLength="254.1" lengthAdjust="spacing">polohopis informativního charakteru</text><text class="wm" transform="translate(904.5,942.5) scale(0.74,1)" textLength="194.6" lengthAdjust="spacing">odvozený z katastrální mapy</text><text class="wm" transform="translate(108,1004) scale(0.74,1)" textLength="254.1" lengthAdjust="spacing">polohopis informativního charakteru</text><text class="wm" transform="translate(130,1024.5) scale(0.74,1)" textLength="194.6" lengthAdjust="spacing">odvozený z katastrální mapy</text><text class="wm" transform="translate(354,1086.5) scale(0.74,1)" textLength="254.1" lengthAdjust="spacing">polohopis informativního charakteru</text><text class="wm" transform="translate(376,1107.0) scale(0.74,1)" textLength="194.6" lengthAdjust="spacing">odvozený z katastrální mapy</text><text class="wm" transform="translate(634.5,1001.9) scale(0.74,1)" textLength="254.1" lengthAdjust="spacing">polohopis informativního charakteru</text><text class="wm" transform="translate(656.5,1022.4) scale(0.74,1)" textLength="194.6" lengthAdjust="spacing">odvozený z katastrální mapy</text><text class="wm" transform="translate(882.5,1085) scale(0.74,1)" textLength="254.1" lengthAdjust="spacing">polohopis informativního charakteru</text><text class="wm" transform="translate(904.5,1105.5) scale(0.74,1)" textLength="194.6" lengthAdjust="spacing">odvozený z katastrální mapy</text><text class="wm" opacity="0.7" transform="translate(111,352) scale(0.74,1)" textLength="254.1" lengthAdjust="spacing">polohopis informativního charakteru</text><text class="wm" opacity="0.7" transform="translate(133,372.5) scale(0.74,1)" textLength="194.6" lengthAdjust="spacing">odvozený z katastrální mapy</text><text class="wm" opacity="0.7" transform="translate(111,515) scale(0.74,1)" textLength="254.1" lengthAdjust="spacing">polohopis informativního charakteru</text>
<g fill="none" stroke="#8e8e8e" stroke-width="2.200">
<path d="M336.500 550 L403 619 L452 567 L506 622"></path>
<path d="M153 714 L181 688 L228 693 L262 673 L301 700"></path>
<path d="M3 770 L20 785 L3 800"></path><path d="M3 900 L23 921 L3 940"></path>
<path d="M190 896 L251 957"></path><path d="M260 957 L303 912.500 L348 957"></path>
</g>
<g fill="none" stroke="#e8e8e8" stroke-width="0.600" stroke-dasharray="1 1.500">
<path d="M336.500 550 L403 619 L452 567 L506 622"></path>
<path d="M153 714 L181 688 L228 693 L262 673 L301 700"></path>
<path d="M190 896 L251 957"></path><path d="M260 957 L303 912.500 L348 957"></path>
</g>
<g fill="none" stroke="#000" stroke-width="2.200" stroke-linejoin="miter">
<path d="M50 270 L198 317.500 L421 395.500 L569.500 446 L787 506.500"></path>
<path d="M224.500 270 L198 317.500"></path>
<path d="M612 270 L569 446"></path>
<path d="M871 270 L787 506.500 L485.500 870 L414.500 957"></path>
<path d="M895 537 L859 532.500 L747 860"></path>
<path d="M446 441 L565 558 L540 583 L541.500 585 L444 686 L323 562.500 Z"></path>
<path d="M198 317.500 L-20 530"></path><path d="M421 395.500 L245 571 L228 705 L155 715 L-20 509"></path>
<path d="M228 706 L301 700 L485.500 870"></path>
<path d="M155 715 L49 957"></path>
<path d="M301 700 L98 957"></path>
<path d="M221 957 L175.500 909 L298.500 785.500 L417 905.500 L391.500 929.500 L393 931.500 L367 957"></path>
</g>
<text class="lb" x="425" y="334" textLength="20.5" lengthAdjust="spacingAndGlyphs">88/7</text><text class="lb" x="706.5" y="374" textLength="20.5" lengthAdjust="spacingAndGlyphs">88/8</text><text class="lb" x="59.5" y="363" textLength="15.5" lengthAdjust="spacingAndGlyphs">9/4</text><text class="lb" x="426" y="565" textLength="35" lengthAdjust="spacingAndGlyphs">St. 413</text><text class="lb" x="36" y="759" textLength="35" lengthAdjust="spacingAndGlyphs">St. 177</text><text class="lb" x="155" y="814" textLength="15.5" lengthAdjust="spacingAndGlyphs">9/7</text><text class="lb" x="381" y="831" textLength="15.5" lengthAdjust="spacingAndGlyphs">9/8</text><text class="lb" x="457" y="761" textLength="15.5" lengthAdjust="spacingAndGlyphs">9/5</text><text class="lb" x="590" y="848" textLength="15.5" lengthAdjust="spacingAndGlyphs">9/6</text><text class="lb" x="824" y="794" textLength="15.5" lengthAdjust="spacingAndGlyphs">9/1</text><text class="lb" x="278" y="894" textLength="35" lengthAdjust="spacingAndGlyphs">St. 435</text>
<polygon points="198,317.500 421,395.500 245,571 228,705 155,715 -20,509 -20,530" fill="url(#dots)"></polygon>
<text x="171" y="504.500" textLength="39" lengthAdjust="spacingAndGlyphs" style="font:italic 12px 'Liberation Sans',sans-serif;fill:#ffd91a;stroke:#fff;stroke-width:2.500px;paint-order:stroke">zahrada</text>
<g fill="none" stroke="#f2d20a" stroke-width="1.100">
<path d="M198 317.500 L421 395.500 L245 571 L228 705 L155 715 L-20 509"></path><path d="M198 317.500 L-20 530"></path>
</g>
<polygon points="420.500,395.300 569.500,446 787,506.500 480.500,818" fill="#ee9900" fill-opacity="0.400" stroke="#ee9900" stroke-width="1"></polygon>
<circle cx="481" cy="817.500" r="84.500" fill="#ee9900" fill-opacity="0.400" stroke="#ee9900" stroke-width="1"></circle>
</g>
<!-- pan/zoom control -->
<g fill="#8f8f8f">
<rect x="34" y="296" width="20" height="20" rx="5"></rect><rect x="12" y="318" width="20" height="20" rx="5"></rect><rect x="34" y="318" width="20" height="20" rx="5"></rect><rect x="56" y="318" width="20" height="20" rx="5"></rect><rect x="34" y="340" width="20" height="20" rx="5"></rect>
<rect x="34" y="367" width="20" height="20" rx="5"></rect><rect x="34" y="543" width="20" height="20" rx="5"></rect>
</g>
<g fill="#787878" fill-opacity="0.500"><rect x="36" y="389" width="16" height="9"></rect><rect x="36" y="400" width="16" height="9"></rect><rect x="36" y="411" width="16" height="9"></rect><rect x="36" y="422" width="16" height="9"></rect><rect x="36" y="433" width="16" height="9"></rect><rect x="36" y="444" width="16" height="9"></rect><rect x="36" y="455" width="16" height="9"></rect><rect x="36" y="466" width="16" height="9"></rect><rect x="36" y="477" width="16" height="9"></rect><rect x="36" y="488" width="16" height="9"></rect><rect x="36" y="499" width="16" height="9"></rect><rect x="36" y="510" width="16" height="9"></rect><rect x="36" y="521" width="16" height="9"></rect><rect x="36" y="532" width="16" height="9"></rect></g>
<rect x="34" y="406" width="20" height="9" rx="3.500" fill="#8a8a8a"></rect><rect x="37" y="409.500" width="14" height="2" fill="#fff"></rect>
<g fill="#fff">
<path d="M44 301.500 L48.500 310 L39.500 310Z"></path><path d="M44 354.500 L48.500 346 L39.500 346Z"></path><path d="M17.500 328 L26 323.500 L26 332.500Z"></path><path d="M70.500 328 L62 323.500 L62 332.500Z"></path>
<circle cx="44" cy="328" r="3"></circle><path d="M44 320 L46.500 323 L41.500 323Z M44 336 L46.500 333 L41.500 333Z M36 328 L39 325.500 L39 330.500Z M52 328 L49 325.500 L49 330.500Z"></path>
<rect x="38.500" y="375.500" width="11" height="3"></rect><rect x="42.500" y="371.500" width="3" height="11"></rect>
<rect x="39" y="551.500" width="10" height="3"></rect>
</g>
</svg><div class="abs mb" style="left:83px;top:281px;background:#ebe9e1;border-color:#bfbcae"><svg width="22" height="20" viewBox="0 0 22 20"><defs><linearGradient id="hg" x1="0.200" y1="0" x2="0.900" y2="1"><stop offset="0.450" stop-color="#fff"></stop><stop offset="1" stop-color="#b9b6a4"></stop></linearGradient></defs><path d="M8 17.800 L5.500 13.500 L3.200 10.800 Q2.600 9.200 4 9 Q5.200 9 6.600 11 L7.200 11.500 L6.300 5 Q6.300 3.200 7.600 3.200 Q8.800 3.200 9.100 4.800 L9.800 9 L9.900 3.600 Q10.100 2.100 11.400 2.100 Q12.600 2.100 12.700 3.700 L12.700 9.200 L13.800 4.600 Q14.300 3.300 15.400 3.600 Q16.400 4 16.100 5.400 L15.200 10.200 L16.600 7.600 Q17.400 6.600 18.200 7.100 Q18.900 7.700 18.400 8.900 L16.500 13.500 Q15.800 16 14.500 17.800 Z" fill="url(#hg)" stroke="#3a3a3a" stroke-width="0.900" stroke-linejoin="round"></path></svg></div><div class="abs mb" style="left:112px;top:281px;background:#ebe9e1;border-color:#bfbcae"><svg width="22" height="20" viewBox="0 0 22 20"><path d="M3.500 10 L11 3 V7 H18 V13 H11 V17Z" fill="#3c6fc0" stroke="#2a5296" stroke-width="0.800"></path></svg></div><div class="abs mb" style="left:141px;top:281px;background:#ebe9e1;border-color:#bfbcae"><svg width="22" height="20" viewBox="0 0 22 20"><path d="M18.500 10 L11 3 V7 H4 V13 H11 V17Z" fill="#a9a9a9" stroke="#969696" stroke-width="0.800"></path></svg></div><svg class="abs" style="left:164px;top:285px" width="8" height="12" viewBox="0 0 8 12"><path d="M1.800 8.500 L5.200 1" stroke="#111" stroke-width="1.100"></path></svg><div class="abs mb" style="left:170px;top:281px;background:#ebe9e1;border-color:#bfbcae"><svg width="22" height="20" viewBox="0 0 22 20"><path d="M3 10 L8 3 L13.500 10 L19 3" fill="none" stroke="#333" stroke-width="1"></path><g fill="#111"><rect x="2" y="9" width="2" height="2"></rect><rect x="7" y="2" width="2" height="2"></rect><rect x="12.500" y="9" width="2" height="2"></rect><rect x="18" y="2" width="2" height="2"></rect></g><rect x="2.500" y="14" width="17" height="3.500" fill="#fff" stroke="#444" stroke-width="1"></rect><path d="M5 14 V16 M7.500 14 V16 M10 14 V16 M12.500 14 V16 M15 14 V16 M17.500 14 V16" stroke="#444" stroke-width="0.800"></path></svg></div><div class="abs mb" style="left:199px;top:281px;background:#ebe9e1;border-color:#bfbcae"><svg width="22" height="20" viewBox="0 0 22 20"><path d="M7.500 4 L18.500 7.500 L16.500 16 L6 13.500Z" fill="#f4deb0" stroke="#9a9078" stroke-width="0.700"></path><g fill="#111"><rect x="6.500" y="3" width="2" height="2"></rect><rect x="17.500" y="6.500" width="2" height="2"></rect><rect x="15.500" y="15" width="2" height="2"></rect></g><circle cx="5.500" cy="13.500" r="5" fill="#3a69b4"></circle><path d="M7.500 19.500 L5 18 L8 17.500Z" fill="#3a69b4"></path><rect x="4.600" y="12.500" width="2" height="4" fill="#fff"></rect><rect x="3.800" y="12.500" width="2" height="1" fill="#fff"></rect><rect x="3.600" y="16" width="4" height="1" fill="#fff"></rect><circle cx="5.500" cy="10.700" r="1.100" fill="#fff"></circle></svg></div><div class="abs mb" style="left:83px;top:321px;background:#ebe9e1;border-color:#bfbcae"><svg width="22" height="20" viewBox="0 0 22 20"><path d="M15 1.500 L5.500 12.500 L9.500 12 L7.500 17.500 L10.500 18.500 L12 13.500 L15.500 16Z" fill="#fff" stroke="#222" stroke-width="1.200" stroke-linejoin="miter"></path></svg></div><div class="abs mb" style="left:112px;top:321px;background:#f2b92a;border-color:#d8a21c"><svg width="22" height="20" viewBox="0 0 22 20"><path d="M7.500 4 L18.500 8 L16.500 16 L3.500 12.500Z" fill="#f9dc8a" stroke="#8a6a20" stroke-width="0.800"></path><g fill="#111"><rect x="6.500" y="3" width="2" height="2"></rect><rect x="17.500" y="7" width="2" height="2"></rect><rect x="15.500" y="15" width="2" height="2"></rect><rect x="2.500" y="11.500" width="2" height="2"></rect></g></svg></div><div class="abs" style="left:708px;top:861px;width:187px;height:96px;background:#e1e5f6;border-left:1px solid #aab2d2;border-top:1px solid #aab2d2"></div>
<svg class="abs" style="left:715px;top:867px" width="180" height="90" viewBox="0 0 180 90">
<rect width="180" height="90" fill="#dacdc1"></rect>
<path d="M0 40 L55 80 L70 90 L0 90Z" fill="#ecede5"></path>
<path d="M66 48 L74 46 L88 70 L84 78 L72 74 L60 80 L58 70 L68 62Z" fill="#cfe3b0"></path>
<path d="M28 32 L44 36 L42 50 L30 46Z" fill="#e3ead3"></path>
<path d="M96 4 L112 2 L150 18 L150 30 L120 26 L100 20Z" fill="#e2e8d4"></path><rect x="101" y="8" width="13" height="13" fill="#d2d2d0"></rect><rect x="117" y="18" width="9" height="8" fill="#dcdcd6"></rect>
<path d="M150 0 L180 0 L180 22 L160 20Z" fill="#e3d6cc"></path><path d="M168 52 L180 50 L180 70 L172 70Z" fill="#d6e8c0"></path>
<g fill="none" stroke="#fff" stroke-width="3.200" stroke-linecap="round" stroke-linejoin="round">
<path d="M0 27 L22 23 L40 28 L66 37 L85 55 L105 78 L116 90"></path>
<path d="M22 23 L25 6 L20 0"></path>
<path d="M25 28 L28 45 L40 55 L54 52 L62 42 L65 37"></path>
<path d="M74 0 L80 8"></path><path d="M98 0 L104 4 L112 10 L130 15 L150 20 L180 25"></path>
<path d="M142 0 L146 10 L150 20 L154 36 L160 60 L166 90"></path><path d="M120 0 L122 8"></path>
<path d="M118 42 L114 56 L110 66 L122 74 L136 82 L150 88"></path><path d="M118 42 L128 44 L145 46 L156 48"></path>
<path d="M131 45 L128 62 L124 72"></path><path d="M145 46 L142 64 L140 78 L152 82"></path><path d="M110 66 L104 70 L97 66"></path>
<path d="M96 56 L100 54 L102 58"></path><path d="M160 60 L172 56 L170 70"></path><path d="M166 22 L168 18"></path>
</g>
<path d="M0 36 L72 90" stroke="#fff" stroke-width="5.500"></path><path d="M0 36 L72 90" stroke="#999" stroke-width="4.200" stroke-dasharray="8 8"></path>
<path d="M104 27 L130 36 L160 41 L180 44" fill="none" stroke="#fbd527" stroke-width="7.500"></path>
<path d="M72 40 L70 28" fill="none" stroke="#fbd527" stroke-width="5"></path><path d="M40 20 L42 26" fill="none" stroke="#fbd527" stroke-width="4"></path>
<path d="M80 12 Q82 4 88 5 Q94 6 92 18" fill="none" stroke="#fbd527" stroke-width="4.500"></path>
<path d="M0 2 L30 6 L62 14 L86 24 L104 28" fill="none" stroke="#f7931d" stroke-width="10" stroke-linecap="round"></path>
<path d="M0 0 L12 0 L10 10 L0 16Z" fill="#f7931d"></path><path d="M0 17 Q10 12 12 2" fill="none" stroke="#222" stroke-width="1.200"></path><path d="M4 0 L52 8 L78 18" fill="none" stroke="#222" stroke-width="0.800"></path>
<circle cx="85" cy="12" r="2.600" fill="#eee" stroke="#7a6a3a" stroke-width="1"></circle>
<rect x="154.500" y="30" width="30" height="19" fill="#2f8a3c"></rect><rect x="156.500" y="32" width="30" height="15" fill="none" stroke="#fff" stroke-width="1.200"></rect>
<text x="162" y="45.500" style="font:italic bold 15px 'Liberation Sans',sans-serif;fill:#fff">E6</text>
<text x="25.500" y="26.500" style="font:15.500px 'Liberation Sans',sans-serif;fill:#111;stroke:#fff;stroke-width:3.500px;paint-order:stroke;stroke-linejoin:round" textLength="60" lengthAdjust="spacingAndGlyphs">U Pyrámu</text>
<g fill="none" stroke="#cc0a0a" stroke-width="1.600"><rect x="86.500" y="41.500" width="8" height="8"></rect><path d="M90.500 38 V53 M83 45.500 H98"></path></g>
<rect x="163.500" y="73.500" width="17" height="17" fill="#fff" stroke="#eee" stroke-width="1"></rect><path d="M166 86 L170 86 L177 78 L177 88 L166 88Z" fill="none" stroke="#aaa" stroke-width="1.300"></path>
</svg>
<div class="abs" style="left:3px;top:957px;width:892px;height:23px;background:#e9e9e9;border-top:1px solid #f8f8f8">
  <div class="abs" style="left:2px;top:4px;width:38px;height:13px;border:2px solid #111;border-top:none;font-size:11px;line-height:10px;text-align:center;color:#444;font-family:'DejaVu Sans Condensed','DejaVu Sans',sans-serif">2 m</div>
  <div class="abs" style="left:43px;top:5px;width:1px;height:13px;background:#999"></div>
  <div class="abs" style="left:48px;top:2px;font-size:17px;line-height:18px;color:#444">©</div>
  <div class="abs" style="left: 64px; top: 2px; font-size: 14.5px; line-height: 18px; color: rgb(58, 134, 214); transform: scaleX(0.9829); transform-origin: 0px 0px;">Copyright</div>
  <div class="abs" style="left:792px;top:5px;width:1px;height:13px;background:#999"></div><div class="abs" style="left:799px;top:5px;width:1px;height:13px;background:#999"></div>
  <div class="abs" style="left: 804px; top: 3px; font-size: 11.5px; line-height: 16px; color: rgb(85, 85, 85); white-space: nowrap; transform: scaleX(0.947); transform-origin: 0px 0px;">-685669, -993748</div>
</div>

<!-- right panel -->
<div class="abs" style="left:895px;top:241px;width:386px;height:741px;background:#d3d3d3"></div>
<div class="abs" style="left:895px;top:244px;width:1px;height:737px;background:#d9d9d9"></div>
<div class="abs" style="left:896px;top:244px;width:5px;height:737px;background:#ececec"></div>
<div class="abs" style="left:901px;top:244px;width:379px;height:737px;background:#d1d1d1"></div>
<div class="abs" style="left:1280px;top:244px;width:1px;height:737px;background:#fff"></div>
<div class="abs" style="left:902px;top:244px;width:376px;height:25px;background:linear-gradient(#f6f6f6,#e2e2e2 60%,#d8d8d8)"></div>
<div class="abs" style="left:973px;top:242px;width:308px;height:23px;background:#333">
  <svg class="abs" style="left:13px;top:6px" width="12" height="12" viewBox="0 0 12 12"><path d="M1.500 10.500 L6.500 5.500" stroke="#fff" stroke-width="2.200" stroke-linecap="round"></path><path d="M6.200 5.800 Q4.800 2.800 7.500 1 L9.500 1.200 L8 3 L9.200 4.200 L11 2.700 Q11.500 5.500 9 6.500 Q7.500 7 6.200 5.800Z" fill="#fff"></path></svg>
  <svg class="abs" style="left:36px;top:7px" width="10" height="10" viewBox="0 0 10 10"><path d="M1.500 1.500 L8.500 8.500 M8.500 1.500 L1.500 8.500" stroke="#fff" stroke-width="2"></path></svg>
  <svg class="abs" style="left:70px;top:6px" width="13" height="13" viewBox="0 0 13 13"><path d="M6.500 1 V12 M1 6.500 H12" stroke="#fff" stroke-width="1.400"></path><path d="M6.500 0 L8.800 2.800 H4.200Z M6.500 13 L8.800 10.200 H4.200Z M0 6.500 L2.800 4.200 V8.800Z M13 6.500 L10.200 4.200 V8.800Z" fill="#fff"></path></svg>
  <div class="abs" style="left: 89px; top: 6px; font-family: &quot;DejaVu Sans&quot;, &quot;DejaVu Sans Condensed&quot;, sans-serif; font-weight: bold; font-size: 10px; line-height: 14px; color: rgb(255, 255, 255); white-space: nowrap; transform: scaleX(0.8664); transform-origin: 0px 0px;">MAP VIEWER FOR LIBEREC REGION CUSTOM</div>
</div>
<div class="abs" style="left:903px;top:269px;width:374px;height:23px;background:linear-gradient(#ececec,#e3e3e3);border-top:1px solid #f3f3f3;border-bottom:1px solid #d2d2d2"><div class="abs acc" style="left:5px;top:4px;color:#222">Vrstvy</div><div class="abs" style="left:339px;top:3px;opacity:1;line-height:0"><svg width="15" height="15" viewBox="0 0 15 15"><rect x="0.500" y="0.500" width="14" height="14" rx="3" fill="#f2f2f2" stroke="#b4b4b4"></rect><path d="M2.500 7.500 H6" stroke="#555" stroke-width="1.200"></path><rect x="5.500" y="4" width="1.300" height="7" fill="#555"></rect><rect x="6.800" y="5" width="5.200" height="4.200" fill="#666"></rect></svg></div><div class="abs" style="left:356px;top:3px;opacity:1;line-height:0"><svg width="15" height="15" viewBox="0 0 15 15"><rect x="0.500" y="0.500" width="14" height="14" rx="3" fill="#f2f2f2" stroke="#b4b4b4"></rect><path d="M4 7.500 H11 M7.500 4 V11" stroke="#666" stroke-width="1.300"></path></svg></div></div><div class="abs" style="left:903px;top:292px;width:374px;height:23px;background:linear-gradient(#ececec,#e3e3e3);border-top:1px solid #f3f3f3;border-bottom:1px solid #d2d2d2"><div class="abs acc" style="left:5px;top:4px;color:#222">Info</div><div class="abs" style="left:339px;top:3px;opacity:1;line-height:0"><svg width="15" height="15" viewBox="0 0 15 15"><rect x="0.500" y="0.500" width="14" height="14" rx="3" fill="#f2f2f2" stroke="#b4b4b4"></rect><path d="M2.500 7.500 H6" stroke="#555" stroke-width="1.200"></path><rect x="5.500" y="4" width="1.300" height="7" fill="#555"></rect><rect x="6.800" y="5" width="5.200" height="4.200" fill="#666"></rect></svg></div><div class="abs" style="left:356px;top:3px;opacity:1;line-height:0"><svg width="15" height="15" viewBox="0 0 15 15"><rect x="0.500" y="0.500" width="14" height="14" rx="3" fill="#f2f2f2" stroke="#b4b4b4"></rect><path d="M4 7.500 H11 M7.500 4 V11" stroke="#666" stroke-width="1.300"></path></svg></div></div><div class="abs" style="left:903px;top:315px;width:374px;height:23px;background:linear-gradient(#dedede,#d8d8d8);border-top:1px solid #f3f3f3;border-bottom:1px solid #d2d2d2"><div class="abs acc" style="left:5px;top:4px;color:#999">Vyhledávání</div><div class="abs" style="left:339px;top:3px;opacity:0.45;line-height:0"><svg width="15" height="15" viewBox="0 0 15 15"><rect x="0.500" y="0.500" width="14" height="14" rx="3" fill="#f2f2f2" stroke="#b4b4b4"></rect><path d="M2.500 7.500 H6" stroke="#555" stroke-width="1.200"></path><rect x="5.500" y="4" width="1.300" height="7" fill="#555"></rect><rect x="6.800" y="5" width="5.200" height="4.200" fill="#666"></rect></svg></div><div class="abs" style="left:356px;top:3px;opacity:0.45;line-height:0"><svg width="15" height="15" viewBox="0 0 15 15"><rect x="0.500" y="0.500" width="14" height="14" rx="3" fill="#f2f2f2" stroke="#b4b4b4"></rect><path d="M4 7.500 H11 M7.500 4 V11" stroke="#666" stroke-width="1.300"></path></svg></div></div><div class="abs" style="left:903px;top:338px;width:374px;height:23px;background:linear-gradient(#ececec,#e3e3e3);border-top:1px solid #f3f3f3;border-bottom:1px solid #d2d2d2"><div class="abs acc" style="left:5px;top:4px;color:#222">Připojit prostorovou službu</div><div class="abs" style="left:339px;top:3px;opacity:1;line-height:0"><svg width="15" height="15" viewBox="0 0 15 15"><rect x="0.500" y="0.500" width="14" height="14" rx="3" fill="#f2f2f2" stroke="#b4b4b4"></rect><path d="M2.500 7.500 H6" stroke="#555" stroke-width="1.200"></path><rect x="5.500" y="4" width="1.300" height="7" fill="#555"></rect><rect x="6.800" y="5" width="5.200" height="4.200" fill="#666"></rect></svg></div><div class="abs" style="left:356px;top:3px;opacity:1;line-height:0"><svg width="15" height="15" viewBox="0 0 15 15"><rect x="0.500" y="0.500" width="14" height="14" rx="3" fill="#f2f2f2" stroke="#b4b4b4"></rect><path d="M4 7.500 H11 M7.500 4 V11" stroke="#666" stroke-width="1.300"></path></svg></div></div><div class="abs" style="left:903px;top:361px;width:374px;height:23px;background:linear-gradient(#ececec,#e3e3e3);border-top:1px solid #f3f3f3;border-bottom:1px solid #d2d2d2"><div class="abs acc" style="left:5px;top:4px;color:#222">Editace</div><div class="abs" style="left:339px;top:3px;opacity:1;line-height:0"><svg width="15" height="15" viewBox="0 0 15 15"><rect x="0.500" y="0.500" width="14" height="14" rx="3" fill="#f2f2f2" stroke="#b4b4b4"></rect><path d="M2.500 7.500 H6" stroke="#555" stroke-width="1.200"></path><rect x="5.500" y="4" width="1.300" height="7" fill="#555"></rect><rect x="6.800" y="5" width="5.200" height="4.200" fill="#666"></rect></svg></div><div class="abs" style="left:356px;top:3px;opacity:1;line-height:0"><svg width="15" height="15" viewBox="0 0 15 15"><rect x="0.500" y="0.500" width="14" height="14" rx="3" fill="#f2f2f2" stroke="#b4b4b4"></rect><path d="M4.500 7.500 H10.500" stroke="#666" stroke-width="1.300"></path></svg></div></div>
<div class="abs" style="left:903px;top:384px;width:374px;height:24px;background:linear-gradient(#ededed,#dcdcdc);border-bottom:1px solid #c8c8c8"></div>
<div class="abs" style="left:906px;top:386px;width:56px;height:21px;background:linear-gradient(#f4f4f4,#e4e4e4);border:1px solid #b9b9b9;border-bottom:none;border-radius:4px 4px 0 0"><div class="abs acc" style="left:9px;top:2px;color:#333">Editace</div></div>
<div class="abs" style="left:965px;top:385px;width:76px;height:23px;background:linear-gradient(#fbfbfb,#efefef);border:1px solid #b9b9b9;border-bottom:none;border-radius:4px 4px 0 0"><div class="abs acc" style="left:8px;top:3px;color:#222;font-weight:bold">Nastavení</div></div>
<div class="abs" style="left:903px;top:408px;width:374px;height:3px;background:#e6e6e6"></div>
<div class="abs" style="left:905px;top:411px;width:370px;height:566px;background:#f1f1f1;border:1px solid #fff;border-top-color:#e4e4e4"></div>
<div class="abs" style="left:910px;top:425px;width:360px;height:183px;border:1px solid #d0d0d0;border-radius:2px"></div>
<div class="abs" style="left:919px;top:419px;padding:0 4px;background:#f1f1f1;font-family:'DejaVu Sans Condensed','DejaVu Sans',sans-serif;font-weight:bold;font-size:11px;line-height:16px;color:#777">Přichytávání</div>
<div class="abs acc acc2" style="left:921px;top:446px;color:#444">Aktivní:</div>
<svg class="abs" style="left:1026px;top:447px" width="12" height="12" viewBox="0 0 12 12"><rect x="0.500" y="0.500" width="11" height="11" rx="2" fill="#e9e9e9" stroke="#9a9a9a"></rect><path d="M2.800 6 L5 8.800 L9.500 2.800" fill="none" stroke="#333" stroke-width="1.900"></path></svg>
<div class="abs acc acc2" style="left:921px;top:470px;color:#444">Vzdálenost:</div>
<div class="abs" style="left:1026px;top:466px;width:80px;height:22px;background:#fff;border:1px solid #b5b8c8;box-shadow:inset 0 1px 2px #ddd"><div class="abs acc acc2" style="left:3px;top:3px;color:#111">5</div></div>
<div class="abs acc acc2" style="left:921px;top:496px;color:#444">Jednotky:</div>
<div class="abs" style="left:1026px;top:492px;width:80px;height:22px;background:#fff;border:1px solid #b5b8c8"><div class="abs acc acc2" style="left:3px;top:3px;color:#111">meters</div>
  <div class="abs" style="left:61px;top:0;width:17px;height:20px;background:linear-gradient(#f8f8f8,#d9d9d9);border-left:1px solid #b5b8c8"><svg class="abs" style="left:4px;top:6px" width="9" height="7" viewBox="0 0 9 7"><path d="M1 1.500 L4.500 5 L8 1.500" fill="none" stroke="#333" stroke-width="1.800"></path></svg></div></div>
<div class="abs" style="left:921px;top:518px;width:338px;height:79px;border:1px solid #d0d0d0;background:#f1f1f1"></div>
<div class="abs" style="left:922px;top:519px;width:336px;height:21px;background:linear-gradient(#f6f6f6,#dedede);border-bottom:1px solid #cfcfcf"><div class="abs acc" style="left:5px;top:3px;color:#222;font-weight:bold">Přichytávání k vrstvám</div></div>
<div class="abs" style="left:927px;top:547px;width:326px;height:43px;background:#fff;border:1px solid #d0d0d0"></div>
<div class="abs" style="left:928px;top:568px;width:324px;height:1px;background:#ededed"></div>
<div class="abs" style="left:945px;top:552px;line-height:0"><svg width="13" height="13" viewBox="0 0 13 13"><rect x="0.500" y="0.500" width="12" height="12" fill="#fff" stroke="#8a8f99"></rect><rect x="1.500" y="1.500" width="10" height="10" fill="#f3f3f3" stroke="#d4d4d4" stroke-width="0.500"></rect><path d="M3 6.500 L5.500 9.500 L10 3" fill="none" stroke="#2a3f9a" stroke-width="1.800"></path></svg></div><div class="abs" style="left:945px;top:573px;line-height:0"><svg width="13" height="13" viewBox="0 0 13 13"><rect x="0.500" y="0.500" width="12" height="12" fill="#fff" stroke="#8a8f99"></rect><rect x="1.500" y="1.500" width="10" height="10" fill="#f3f3f3" stroke="#d4d4d4" stroke-width="0.500"></rect><path d="M3 6.500 L5.500 9.500 L10 3" fill="none" stroke="#2a3f9a" stroke-width="1.800"></path></svg></div>
<div class="abs" style="left:980px;top:552px;font-size:11px;line-height:13px;color:#333;white-space:nowrap">Hranice parcel KN</div>
<div class="abs" style="left:980px;top:573px;font-size:11px;line-height:13px;color:#333;white-space:nowrap">Moje linie</div>
<div class="abs" style="left:0;top:981px;width:1281px;height:3px;background:#c1c1c1"></div>


</div>


</body></html>
